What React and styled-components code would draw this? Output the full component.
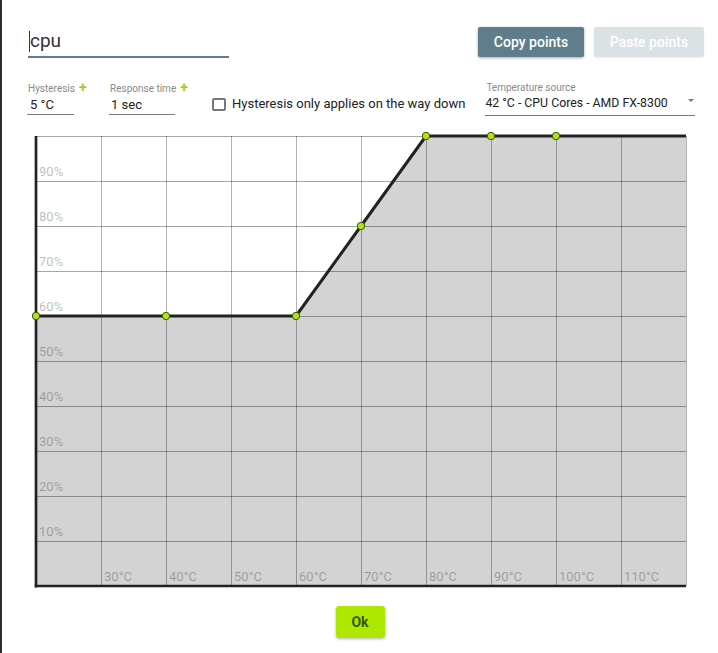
import React from 'react';
import styled, { createGlobalStyle } from 'styled-components';

const Global = createGlobalStyle`
  html, body { margin: 0; padding: 0; background: #2b2f31; }
  body { font-family: Roboto, "Noto Sans", sans-serif; }
  #root { width: 718px; height: 653px; overflow: hidden; }
  * { box-sizing: border-box; }
`;

const Backdrop = styled.div`
  width: 718px;
  height: 653px;
  display: flex;
  background: #2b2f31;
`;

const Dialog = styled.div`
  margin-left: 2px;
  flex: 1;
  background: #fff;
  display: flex;
  flex-direction: column;
  padding-top: 27px;
`;

const Header = styled.div`
  display: flex;
  align-items: flex-start;
  justify-content: space-between;
  padding: 0 14px 0 26px;
  height: 31px;
`;

const NameField = styled.div`
  position: relative;
  width: 201px;
  height: 31px;
  padding: 3px 0 0 2px;
  border-bottom: 2px solid #607d8b;
  font-size: 19px;
  line-height: 22px;
  color: #333;
`;

const Caret = styled.span`
  position: absolute;
  left: 1px;
  top: 4px;
  width: 1px;
  height: 21px;
  background: #333;
`;

const ButtonGroup = styled.div`
  display: flex;
  gap: 10px;
`;

const ActionButton = styled.button`
  width: ${p => p.$w}px;
  height: 30px;
  border: none;
  border-radius: 2px;
  font-family: Roboto, sans-serif;
  font-size: 14px;
  font-weight: 500;
  color: #fff;
  background: ${p => (p.$disabled ? '#dbe2e5' : '#607d8b')};
  box-shadow: ${p => (p.$disabled ? '0 1px 2px rgba(0,0,0,0.08)' : '0 1px 3px rgba(0,0,0,0.35)')};
  padding: 0;
`;

const Settings = styled.div`
  display: flex;
  align-items: flex-start;
  padding: 0 0 0 25px;
  margin-top: 24px;
  height: 35px;
`;

const Field = styled.div`
  display: flex;
  flex-direction: column;
  width: ${p => p.$w}px;
  margin-right: ${p => p.$mr || 0}px;
`;

const Label = styled.div`
  font-size: 10px;
  line-height: 12px;
  color: #8a8a8a;
  padding-left: 1px;
  white-space: nowrap;
`;

const Plus = styled.span`
  color: #9ed01c;
  font-weight: 700;
  font-size: 14px;
  line-height: 10px;
  margin-left: 4px;
`;

const Value = styled.div`
  margin-top: 1px;
  font-size: ${p => p.$fs || 13}px;
  line-height: 17px;
  padding: 0 0 ${p => p.$pb || 1}px ${p => p.$pl ?? 3}px;
  border-bottom: 1px solid #7a7a7a;
  color: #222;
  display: flex;
  align-items: flex-start;
  white-space: nowrap;
`;

const CheckRow = styled.label`
  display: flex;
  align-items: center;
  margin-top: 14px;
  margin-right: 20px;
  font-size: 13px;
  line-height: 16px;
  color: #222;
  white-space: nowrap;
`;

const Box = styled.span`
  width: 14px;
  height: 13px;
  border: 2px solid #777;
  border-radius: 2px;
  margin-right: 6px;
`;

const Arrow = styled.span`
  margin-left: auto;
  margin-top: 4px;
  margin-right: 1px;
  width: 0;
  height: 0;
  border-left: 3px solid transparent;
  border-right: 3px solid transparent;
  border-top: 3px solid #777;
`;

const ChartWrap = styled.div`
  padding-left: 28px;
  margin-top: 14px;
  height: 460px;
`;

const Footer = styled.div`
  display: flex;
  justify-content: center;
  margin-top: 15px;
`;

const OkButton = styled.button`
  width: 49px;
  height: 32px;
  border: none;
  border-radius: 3px;
  background: #aee800;
  color: #33550a;
  font-family: Roboto, sans-serif;
  font-size: 14px;
  font-weight: 700;
  box-shadow: 0 1px 3px rgba(0,0,0,0.3);
  padding: 0;
`;

const X0 = 6;
const Y0 = 5;
const W = 650;
const H = 450;
const tx = t => X0 + (t - 20) * 6.5;
const py = p => Y0 + (100 - p) * 4.5;
const pts = [[20, 60], [40, 60], [60, 60], [70, 80], [80, 100], [90, 100], [100, 100]];

function Chart() {
  const curve = [...pts, [120, 100]].map(([t, p]) => `${tx(t)},${py(p)}`).join(' ');
  const fill = `${curve} ${tx(120)},${py(0)} ${tx(20)},${py(0)}`;
  const vLines = Array.from({ length: 10 }, (_, i) => X0 + (i + 1) * 65);
  const hLines = Array.from({ length: 10 }, (_, j) => Y0 + j * 45);
  const yLabels = [90, 80, 70, 60, 50, 40, 30, 20, 10];
  const xLabels = [30, 40, 50, 60, 70, 80, 90, 100, 110];
  return (
    <svg width="664" height="460" viewBox="0 0 664 460" style={{ display: 'block' }}>
      <rect x={X0} y={Y0} width={W} height={H} fill="#fff" />
      <polygon points={fill} fill="#d3d3d3" />
      {vLines.map(x => (
        <line key={'v' + x} x1={x + 0.5} x2={x + 0.5} y1={Y0} y2={Y0 + H} stroke="rgba(0,0,0,0.3)" strokeWidth="1" />
      ))}
      {hLines.map(y => (
        <line key={'h' + y} x1={X0} x2={X0 + W} y1={y + 0.5} y2={y + 0.5} stroke="rgba(0,0,0,0.35)" strokeWidth="1" />
      ))}
      {yLabels.map(p => (
        <text key={'y' + p} x={X0 + 3} y={py(p) - 5} fontSize="13" fontFamily="Roboto, sans-serif" fill="rgba(0,0,0,0.28)">{p}%</text>
      ))}
      {xLabels.map(t => (
        <text key={'x' + t} x={tx(t) + 3} y={Y0 + H - 5} fontSize="13" fontFamily="Roboto, sans-serif" fill="rgba(0,0,0,0.28)">{t}°C</text>
      ))}
      <polyline points={curve} fill="none" stroke="#222" strokeWidth="3" strokeLinejoin="round" />
      <line x1={X0} x2={X0} y1={Y0} y2={Y0 + H + 1.5} stroke="#222" strokeWidth="2.7" />
      <line x1={X0 - 1.3} x2={X0 + W} y1={Y0 + H} y2={Y0 + H} stroke="#222" strokeWidth="2.7" />
      {pts.map(([t, p]) => (
        <circle key={'c' + t} cx={tx(t)} cy={py(p)} r="3.7" fill="#b2e21a" stroke="#3f5200" strokeWidth="1" />
      ))}
    </svg>
  );
}

export default function App() {
  return (
    <Backdrop>
      <Global />
      <Dialog>
        <Header>
          <NameField>
            <Caret />
            cpu
          </NameField>
          <ButtonGroup>
            <ActionButton $w={106}>Copy points</ActionButton>
            <ActionButton $w={110} $disabled>Paste points</ActionButton>
          </ButtonGroup>
        </Header>
        <Settings>
          <Field $w={47} $mr={35}>
            <Label>Hysteresis<Plus>+</Plus></Label>
            <Value>5 °C</Value>
          </Field>
          <Field $w={66} $mr={37}>
            <Label>Response time<Plus>+</Plus></Label>
            <Value $pl={2}>1 sec</Value>
          </Field>
          <CheckRow>
            <Box />
            Hysteresis only applies on the way down
          </CheckRow>
          <Field $w={210}>
            <Label>Temperature source</Label>
            <Value $pb={3} $pl={0} $fs={12.3}>
              42 °C - CPU Cores - AMD FX-8300
              <Arrow />
            </Value>
          </Field>
        </Settings>
        <ChartWrap>
          <Chart />
        </ChartWrap>
        <Footer>
          <OkButton>Ok</OkButton>
        </Footer>
      </Dialog>
    </Backdrop>
  );
}
